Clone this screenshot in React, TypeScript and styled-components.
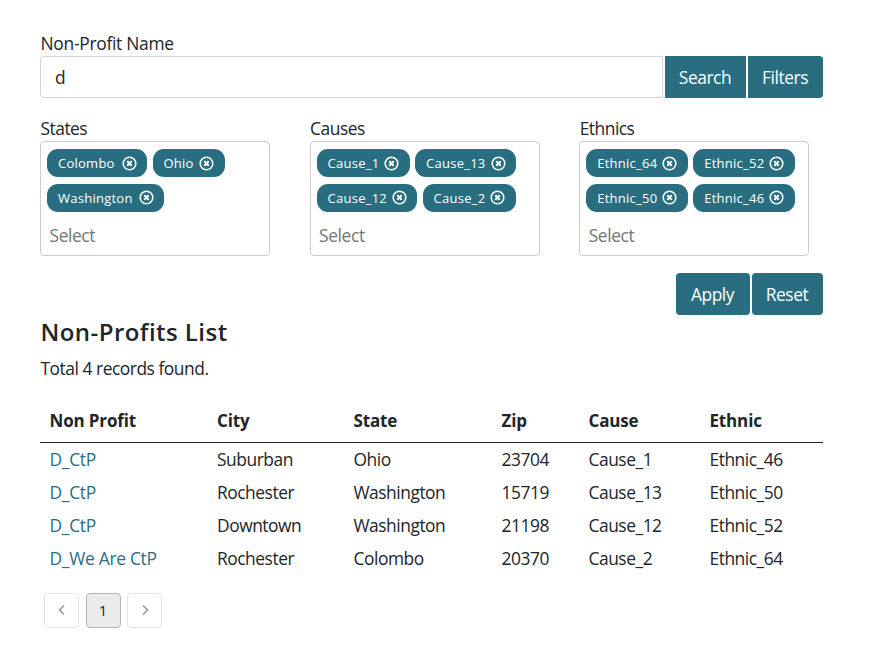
import React from "react";
import styled, { createGlobalStyle } from "styled-components";

const teal = "#296e80";
const ink = "#212529";

const GlobalStyle = createGlobalStyle`
  *, *::before, *::after { box-sizing: border-box; }
  body {
    margin: 0;
    background: #fff;
    color: ${ink};
    font-family: "Open Sans", "Noto Sans", sans-serif;
    font-size: 17.4px;
    font-weight: 400;
    line-height: 24px;
    letter-spacing: -0.47px;
  }
`;

const Page = styled.main`
  width: 783px;
  margin-left: 40px;
  padding-top: 32px;
`;

const Label = styled.label<{ $spacing?: number }>`
  display: block;
  height: 24px;
  padding-left: 0.5px;
  line-height: 22px;
  letter-spacing: ${(p) => p.$spacing ?? -0.5}px;
`;

const SearchBar = styled.div`
  display: flex;
  gap: 2px;
  height: 42px;
`;

const SearchInput = styled.input`
  flex: 1;
  min-width: 0;
  padding: 0 14px;
  border: 1px solid #ced4da;
  border-radius: 4px 0 0 4px;
  outline: none;
  background: #fff;
  color: ${ink};
  font: inherit;
`;

const Button = styled.button<{ $width: number; $radius?: string }>`
  width: ${(p) => p.$width}px;
  height: 42px;
  padding: 0 1px 1px 0;
  border: 0;
  border-radius: ${(p) => p.$radius ?? "4px"};
  background: ${teal};
  color: #fff;
  font: inherit;
  letter-spacing: -0.45px;
`;

const FilterGrid = styled.section`
  display: grid;
  grid-template-columns: repeat(3, 230px);
  column-gap: 39.6px;
  margin-top: 19px;
`;

const SelectBox = styled.div`
  height: 115px;
  padding: 7px 6px 0;
  border: 1px solid #ccc;
  border-radius: 4px;
`;

const Chips = styled.div`
  display: flex;
  flex-wrap: wrap;
  gap: 6.5px 5.5px;
`;

const Chip = styled.span<{ $width: number }>`
  display: flex;
  align-items: center;
  justify-content: space-between;
  width: ${(p) => p.$width}px;
  height: 28.2px;
  padding: 0 10.5px 0 11px;
  border-radius: 11px;
  background: ${teal};
  color: #fff;
  font-size: 13px;
  font-weight: 500;
  line-height: 20px;
  letter-spacing: 0.25px;
  white-space: nowrap;
`;

const SelectHint = styled.div`
  margin-top: 11px;
  padding-left: 2.5px;
  color: #757575;
  letter-spacing: -0.4px;
`;

const Actions = styled.div`
  display: flex;
  justify-content: flex-end;
  gap: 2px;
  margin-top: 17px;
`;

const Heading = styled.h1`
  margin: 0;
  padding-left: 0.5px;
  font-size: 24px;
  font-weight: 600;
  line-height: 34px;
  letter-spacing: 0.45px;
`;

const Summary = styled.p`
  margin: 7px 0 0;
  padding-left: 0.5px;
`;

const Table = styled.table`
  width: 100%;
  margin-top: 20px;
  border-collapse: separate;
  border-spacing: 0;
  table-layout: fixed;
`;

const HeadCell = styled.th<{ $width: number }>`
  width: ${(p) => p.$width}px;
  height: 43px;
  padding: 0 0 0 9.5px;
  border-bottom: 1px solid ${ink};
  font-size: 17px;
  font-weight: 700;
  letter-spacing: -0.15px;
  text-align: left;
`;

const Cell = styled.td`
  height: 33px;
  padding: 0 0 2px 9.5px;
  white-space: nowrap;
`;

const RecordLink = styled.a`
  color: ${teal};
  letter-spacing: -0.28px;
  text-decoration: none;
`;

const Pagination = styled.nav`
  display: flex;
  gap: 6.5px;
  margin: 18px 0 0 4px;
`;

const PageButton = styled.button<{ $current?: boolean }>`
  display: flex;
  align-items: center;
  justify-content: center;
  width: 35px;
  height: 35px;
  padding: 0 0 1px;
  border: 1px solid ${(p) => (p.$current ? "#b4b4b4" : "#e4e4e4")};
  border-radius: 4px;
  background: ${(p) => (p.$current ? "#ebebeb" : "#fff")};
  color: ${ink};
  font: 400 15px/20px "Open Sans", sans-serif;
`;

const RemoveIcon = () => (
  <svg width="15" height="15" viewBox="0 0 15 15" fill="none" stroke="#fff">
    <circle cx="7.5" cy="7.5" r="6.3" strokeWidth="1.6" />
    <path d="M5.3 5.3 9.7 9.7M9.7 5.3 5.3 9.7" strokeWidth="2" />
  </svg>
);

const Chevron = ({ d }: { d: string }) => (
  <svg width="12" height="12" viewBox="0 0 12 12" fill="none" stroke="#9b9b9b" strokeWidth="1.7">
    <path d={d} />
  </svg>
);

const filters = [
  { label: "States", chips: [["Colombo", 100], ["Ohio", 72], ["Washington", 117]] },
  { label: "Causes", chips: [["Cause_1", 93], ["Cause_13", 101], ["Cause_12", 100.5], ["Cause_2", 93]] },
  { label: "Ethnics", chips: [["Ethnic_64", 101.5], ["Ethnic_52", 101.5], ["Ethnic_50", 101.5], ["Ethnic_46", 101.5]] },
] as { label: string; chips: [string, number][] }[];

const columns: [string, number][] = [
  ["Non Profit", 167.5],
  ["City", 136.5],
  ["State", 148],
  ["Zip", 87],
  ["Cause", 121],
  ["Ethnic", 123],
];

const records = [
  ["D_CtP", "Suburban", "Ohio", "23704", "Cause_1", "Ethnic_46"],
  ["D_CtP", "Rochester", "Washington", "15719", "Cause_13", "Ethnic_50"],
  ["D_CtP", "Downtown", "Washington", "21198", "Cause_12", "Ethnic_52"],
  ["D_We Are CtP", "Rochester", "Colombo", "20370", "Cause_2", "Ethnic_64"],
];

export default function App() {
  return (
    <>
      <GlobalStyle />
      <Page>
        <Label htmlFor="name" $spacing={-0.28}>Non-Profit Name</Label>
        <SearchBar>
          <SearchInput id="name" defaultValue="d" />
          <Button $width={81} $radius="0">Search</Button>
          <Button $width={75} $radius="0 4px 4px 0">Filters</Button>
        </SearchBar>
        <FilterGrid>
          {filters.map((filter) => (
            <div key={filter.label}>
              <Label>{filter.label}</Label>
              <SelectBox>
                <Chips>
                  {filter.chips.map(([name, width]) => (
                    <Chip key={name} $width={width}>
                      {name}
                      <RemoveIcon />
                    </Chip>
                  ))}
                </Chips>
                <SelectHint>Select</SelectHint>
              </SelectBox>
            </div>
          ))}
        </FilterGrid>
        <Actions>
          <Button $width={74}>Apply</Button>
          <Button $width={71}>Reset</Button>
        </Actions>
        <Heading>Non-Profits List</Heading>
        <Summary>Total 4 records found.</Summary>
        <Table>
          <thead>
            <tr>
              {columns.map(([name, width]) => (
                <HeadCell key={name} $width={width}>{name}</HeadCell>
              ))}
            </tr>
          </thead>
          <tbody>
            {records.map((record, row) => (
              <tr key={row}>
                {record.map((value, column) => (
                  <Cell key={column}>
                    {column === 0 ? <RecordLink href="#">{value}</RecordLink> : value}
                  </Cell>
                ))}
              </tr>
            ))}
          </tbody>
        </Table>
        <Pagination>
          <PageButton aria-label="Previous"><Chevron d="M8 1.5 3.5 6 8 10.5" /></PageButton>
          <PageButton $current>1</PageButton>
          <PageButton aria-label="Next"><Chevron d="M4 1.5 8.5 6 4 10.5" /></PageButton>
        </Pagination>
      </Page>
    </>
  );
}
